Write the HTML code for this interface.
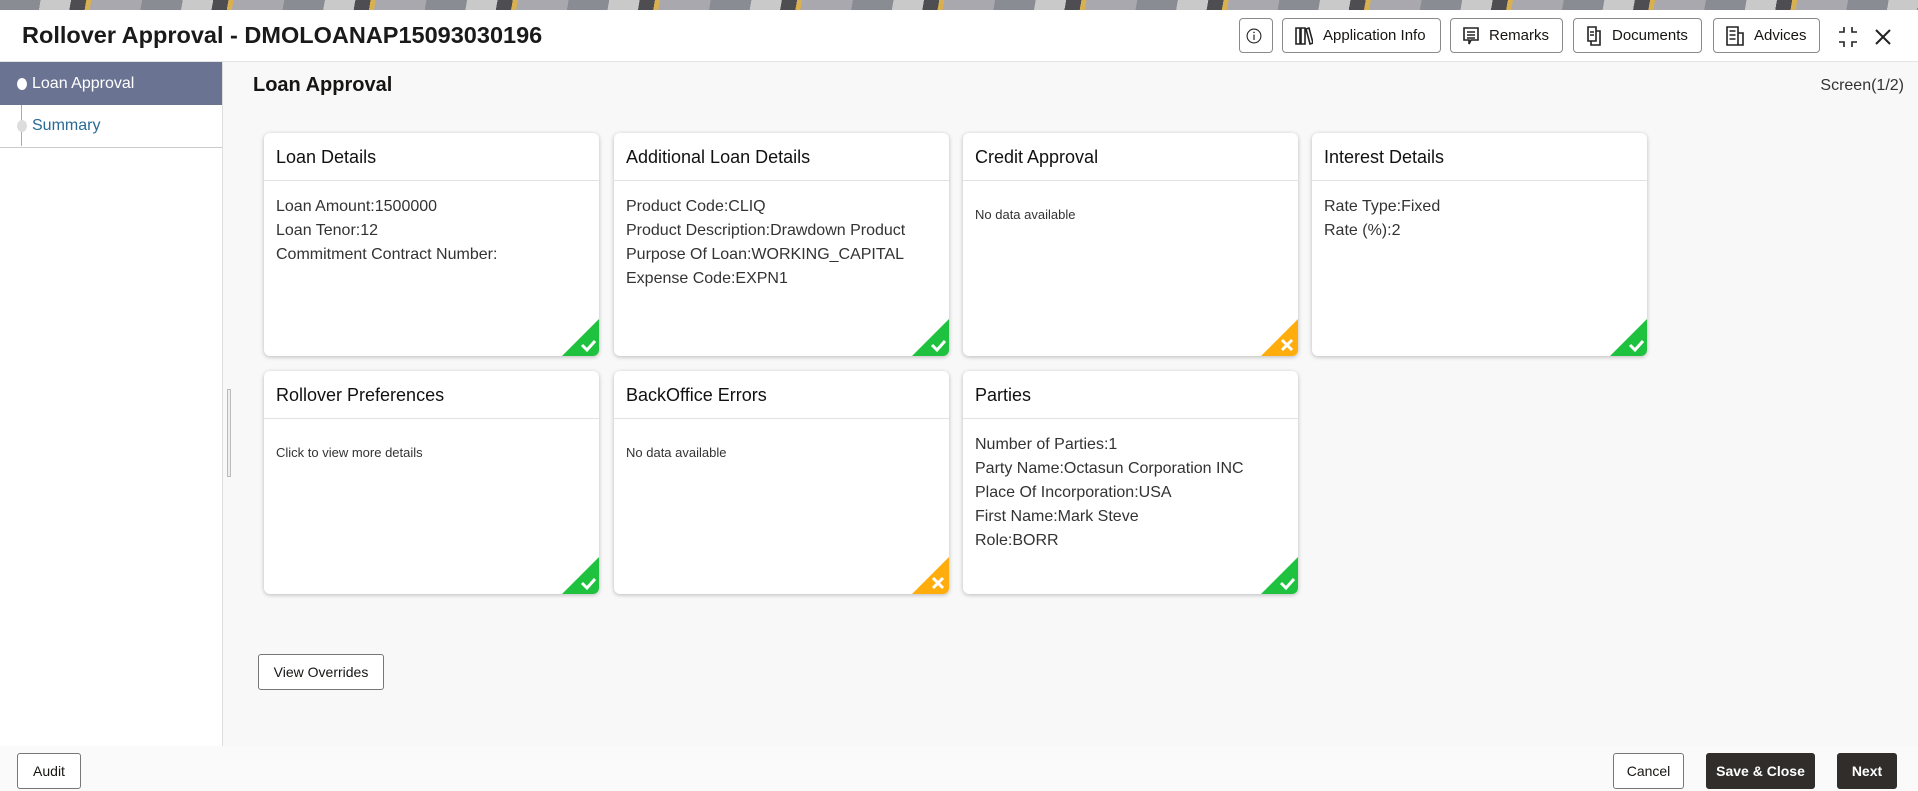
<!DOCTYPE html>
<html><head><meta charset="utf-8"><style>
*{box-sizing:border-box;margin:0;padding:0}
body{width:1918px;height:791px;overflow:hidden;font-family:"Liberation Sans",sans-serif;background:#f8f8f8;position:relative;color:#161513}
.top{position:absolute;left:0;top:0;width:1918px;height:10px;background:repeating-linear-gradient(100deg,#8a8c94 0 40px,#c9c9c9 40px 70px,#4e4e52 70px 85px,#d8b050 85px 90px,#a8a8ae 90px 140px)}
.hdr{position:absolute;left:0;top:10px;width:1918px;height:52px;background:#fff;border-bottom:1px solid #e4e4e4}
.title{position:absolute;left:22px;top:12px;font-size:23.5px;font-weight:bold;color:#1a1a1a}
.btn{position:absolute;top:8px;height:35px;border:1px solid #8a8a8a;border-radius:4px;background:#fff;font-size:15px;display:flex;align-items:center;padding-left:12px}
.btn svg{margin-right:10px}
.side{position:absolute;left:0;top:62px;width:223px;height:684px;background:#fff;border-right:1px solid #ddd}
.row{height:43px;font-size:16px;display:flex;align-items:center;padding-left:32px;position:relative;border-bottom:1px solid #ccc}
.dot{position:absolute;left:17px;width:10px;height:12px;border-radius:50%}
.main-h{position:absolute;left:253px;top:74px;font-size:20px;font-weight:bold}
.scr{position:absolute;right:14px;top:77px;font-size:16px;color:#333}
.card{position:absolute;width:335px;height:223px;background:#fff;border-radius:6px;box-shadow:0 1px 4px rgba(0,0,0,.25);overflow:hidden}
.card h3{height:48px;border-bottom:1px solid #e2e2e2;font-size:18px;font-weight:normal;padding:14px 0 0 12px;color:#111}
.card .b{padding:14px 12px;font-size:16px;line-height:24px;color:#333}
.card .s{font-size:13px;padding-top:22px}
.tri{position:absolute;right:0;bottom:0;width:37px;height:37px}
.ob{position:absolute;height:36px;border:1px solid #777;border-radius:3px;background:#fff;font-size:14px;display:flex;align-items:center;justify-content:center}
.dk{background:#312d2a;color:#fff;border-color:#312d2a;font-weight:bold}
.foot{position:absolute;left:0;top:746px;width:1918px;height:45px;background:#fafafa}
</style></head><body>
<div class="top"></div>
<div class="hdr">
<div class="title">Rollover Approval - DMOLOANAP15093030196</div>
<div class="btn" style="left:1239px;width:34px;padding-left:6px"><svg width="22" height="22" viewBox="0 0 22 22"><circle cx="11" cy="11" r="9.5" fill="none" stroke="#222" stroke-width="1.5"/><rect x="10.2" y="9" width="1.6" height="7.5" fill="#222"/><circle cx="11" cy="6" r="1.1" fill="#222"/></svg></div>
<div class="btn" style="left:1282px;width:159px"><svg width="18" height="20" viewBox="0 0 18 20"><path d="M1 2h4v16H1zM6 2h4v16H6zM11 3l3-1 4 15-3 1z" fill="none" stroke="#222" stroke-width="1.6"/></svg>Application Info</div>
<div class="btn" style="left:1450px;width:113px"><svg width="16" height="20" viewBox="0 0 16 20"><path d="M1 2h14v12H8l-2 4V14H1z" fill="none" stroke="#222" stroke-width="1.6"/><path d="M4 6h8M4 9h8M4 12h8" stroke="#222" stroke-width="1.4"/></svg>Remarks</div>
<div class="btn" style="left:1573px;width:129px"><svg width="16" height="20" viewBox="0 0 16 20"><path d="M2 1h8v14H2zM10 5h4v14H5v-4" fill="none" stroke="#222" stroke-width="1.6"/><path d="M4 6h4M4 9h4" stroke="#222" stroke-width="1.4"/></svg>Documents</div>
<div class="btn" style="left:1713px;width:107px"><svg width="18" height="20" viewBox="0 0 18 20"><path d="M1 1h11v18H1zM12 7h5v12h-5" fill="none" stroke="#222" stroke-width="1.6"/><path d="M3.5 5h6M3.5 9h6M3.5 13h6" stroke="#222" stroke-width="1.6"/></svg>Advices</div>
<svg style="position:absolute;left:1837px;top:16px" width="22" height="22" viewBox="0 0 22 22"><path d="M7 1v5H2M15 1v5h5M7 21v-5H2M15 21v-5h5" fill="none" stroke="#222" stroke-width="1.6"/></svg>
<svg style="position:absolute;left:1875px;top:19px" width="16" height="16" viewBox="0 0 16 16"><path d="M1 1l14 14M15 1L1 15" stroke="#222" stroke-width="2"/></svg>
</div>
<div class="side">
<div style="position:absolute;left:21px;top:22px;width:1px;height:62px;background:#aaa"></div>
<div class="row" style="background:#6b7393;color:#fff;border-bottom:none"><span class="dot" style="background:#fff"></span>Loan Approval</div>
<div class="row" style="color:#2a6a94"><span class="dot" style="background:#ddd"></span>Summary</div>
</div>
<div style="position:absolute;left:227px;top:389px;width:4px;height:88px;border:1px solid #bbb;background:#eee"></div>
<div class="main-h">Loan Approval</div>
<div class="scr">Screen(1/2)</div>

<div class="card" style="left:264px;top:133px"><h3>Loan Details</h3><div class="b">Loan Amount:1500000<br>Loan Tenor:12<br>Commitment Contract Number:</div><svg class="tri" viewBox="0 0 37 37"><path d="M37 0V37H0z" fill="#1fc23f"/><path d="M20 26l5 5 8-9" fill="none" stroke="#fff" stroke-width="3"/></svg></div>
<div class="card" style="left:614px;top:133px"><h3>Additional Loan Details</h3><div class="b">Product Code:CLIQ<br>Product Description:Drawdown Product<br>Purpose Of Loan:WORKING_CAPITAL<br>Expense Code:EXPN1</div><svg class="tri" viewBox="0 0 37 37"><path d="M37 0V37H0z" fill="#1fc23f"/><path d="M20 26l5 5 8-9" fill="none" stroke="#fff" stroke-width="3"/></svg></div>
<div class="card" style="left:963px;top:133px"><h3>Credit Approval</h3><div class="b s">No data available</div><svg class="tri" viewBox="0 0 37 37"><path d="M37 0V37H0z" fill="#ffad0d"/><path d="M21 21l10 10M31 21l-10 10" stroke="#fff" stroke-width="3"/></svg></div>
<div class="card" style="left:1312px;top:133px"><h3>Interest Details</h3><div class="b">Rate Type:Fixed<br>Rate (%):2</div><svg class="tri" viewBox="0 0 37 37"><path d="M37 0V37H0z" fill="#1fc23f"/><path d="M20 26l5 5 8-9" fill="none" stroke="#fff" stroke-width="3"/></svg></div>
<div class="card" style="left:264px;top:371px"><h3>Rollover Preferences</h3><div class="b s">Click to view more details</div><svg class="tri" viewBox="0 0 37 37"><path d="M37 0V37H0z" fill="#1fc23f"/><path d="M20 26l5 5 8-9" fill="none" stroke="#fff" stroke-width="3"/></svg></div>
<div class="card" style="left:614px;top:371px"><h3>BackOffice Errors</h3><div class="b s">No data available</div><svg class="tri" viewBox="0 0 37 37"><path d="M37 0V37H0z" fill="#ffad0d"/><path d="M21 21l10 10M31 21l-10 10" stroke="#fff" stroke-width="3"/></svg></div>
<div class="card" style="left:963px;top:371px"><h3>Parties</h3><div class="b">Number of Parties:1<br>Party Name:Octasun Corporation INC<br>Place Of Incorporation:USA<br>First Name:Mark Steve<br>Role:BORR</div><svg class="tri" viewBox="0 0 37 37"><path d="M37 0V37H0z" fill="#1fc23f"/><path d="M20 26l5 5 8-9" fill="none" stroke="#fff" stroke-width="3"/></svg></div>

<div class="ob" style="left:258px;top:654px;width:126px">View Overrides</div>
<div class="foot"></div>
<div class="ob" style="left:17px;top:753px;width:64px">Audit</div>
<div class="ob" style="left:1613px;top:753px;width:71px">Cancel</div>
<div class="ob dk" style="left:1706px;top:753px;width:109px">Save &amp; Close</div>
<div class="ob dk" style="left:1837px;top:753px;width:60px">Next</div>
</body></html>
